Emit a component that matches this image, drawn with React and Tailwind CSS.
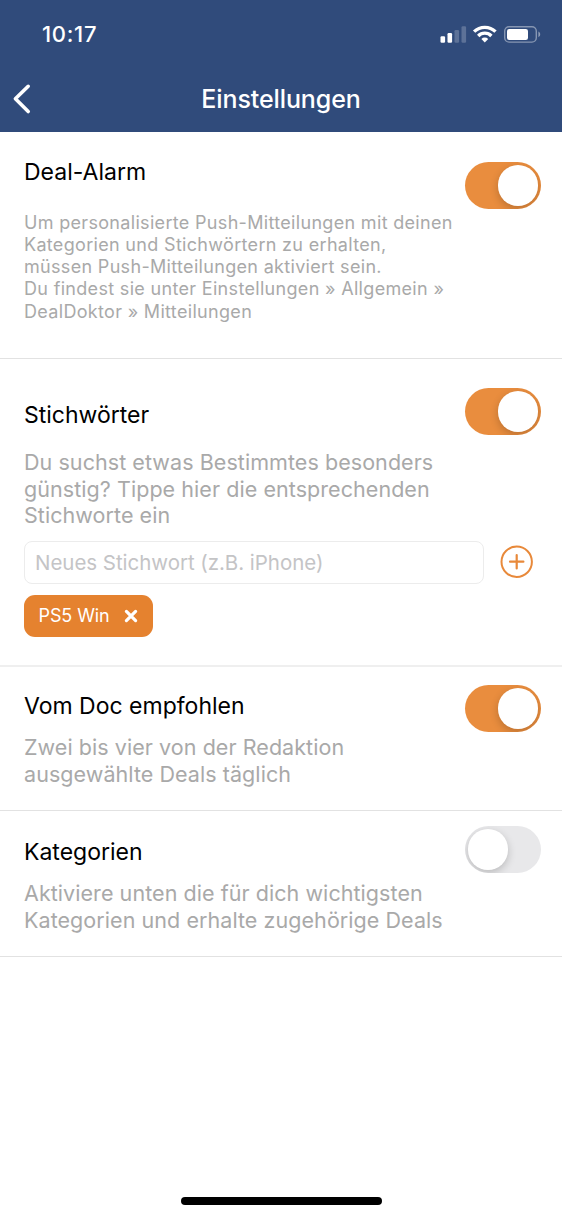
import React, { useState } from 'react';
import clsx from 'clsx';

function StatusBar() {
  return (
    <div className="flex h-[66px] items-start justify-between pl-[42px] pr-[21px] pt-[20px] text-white">
      <span className="text-[22px] font-medium leading-[28px] tracking-[0.7px]">10:17</span>
      <svg className="mt-[5px] h-[18px] w-[101px]" viewBox="0 0 101 18" fill="none">
        <rect x="0.5" y="11.2" width="4.6" height="6.5" rx="1.2" fill="white" />
        <rect x="7.5" y="8" width="4.6" height="9.7" rx="1.2" fill="white" />
        <rect x="14.5" y="5" width="4.6" height="12.7" rx="1.2" fill="white" fillOpacity="0.22" />
        <rect x="21.5" y="1.2" width="4.6" height="16.5" rx="1.2" fill="white" fillOpacity="0.22" />
        <g stroke="white" strokeWidth="3.3">
          <path d="M34.1 6.7a15.2 15.2 0 0 1 21.4 0" />
          <path d="M38.2 11a9.2 9.2 0 0 1 13.2 0" />
        </g>
        <path d="M41.4 14a4.8 4.8 0 0 1 6.8 0l-3.4 3.6z" fill="white" />
        <rect x="64.7" y="1.7" width="31.6" height="15.4" rx="4.4" stroke="white" strokeOpacity="0.42" strokeWidth="1.4" />
        <rect x="67" y="4" width="21" height="11" rx="2.2" fill="white" />
        <path d="M98.4 6.6v5.6c2.4-1 2.4-4.6 0-5.6z" fill="white" fillOpacity="0.45" />
      </svg>
    </div>
  );
}

function Header() {
  return (
    <header className="h-[132px] bg-[#304b7b]">
      <StatusBar />
      <div className="grid h-[66px] grid-cols-[60px_1fr_60px] items-center">
        <button className="pl-[12px]" aria-label="Zurück">
          <svg className="h-[32px] w-[20px]" viewBox="0 0 20 32" fill="none">
            <path d="M16.2 3.3 3.4 15.8 16.2 28.6" stroke="white" strokeWidth="3.6" strokeLinecap="round" strokeLinejoin="round" />
          </svg>
        </button>
        <h1 className="text-center text-[25px] font-medium leading-[32px] tracking-[-0.1px] text-white">Einstellungen</h1>
      </div>
    </header>
  );
}

function Toggle({ label, defaultOn = false }) {
  const [on, setOn] = useState(defaultOn);
  return (
    <button
      role="switch"
      aria-checked={on}
      aria-label={label}
      onClick={() => setOn(!on)}
      className={clsx(
        'flex h-[46.5px] w-[76.5px] shrink-0 items-center overflow-hidden rounded-full px-[3px]',
        on ? 'justify-end bg-[#e98d3e]' : 'justify-start bg-[#e8e8ea]'
      )}
    >
      <span className="size-[40.5px] rounded-full bg-white shadow-[0_3px_8px_rgba(0,0,0,0.2)]" />
    </button>
  );
}

function Title({ children }) {
  return <h2 className="text-[23px] leading-[28px] tracking-[0px] text-black">{children}</h2>;
}

function Description({ lines }) {
  return (
    <p className="whitespace-nowrap text-[21.5px] leading-[26.7px] tracking-[0.06px] text-[#a9a9a9]">
      {lines.map((line) => (
        <span key={line} className="block">{line}</span>
      ))}
    </p>
  );
}

const alarmLines = [
  'Um personalisierte Push-Mitteilungen mit deinen',
  'Kategorien und Stichwörtern zu erhalten,',
  'müssen Push-Mitteilungen aktiviert sein.',
  'Du findest sie unter Einstellungen » Allgemein »',
  'DealDoktor » Mitteilungen',
];

export default function App() {
  return (
    <div className="flex h-[1217px] w-[562px] flex-col bg-white font-['Inter',sans-serif]">
      <Header />
      <main className="flex-1">
        <section className="flex h-[227px] justify-between border-b border-[#e2e2e2] pl-[24px] pr-[21px]">
          <div className="pt-[26px]">
            <Title>Deal-Alarm</Title>
            <p className="mt-[25.6px] whitespace-nowrap text-[18px] leading-[22.3px] tracking-[0.32px] text-[#a9a9a9]">
              {alarmLines.map((line) => (
                <span key={line} className="block">{line}</span>
              ))}
            </p>
          </div>
          <div className="pt-[30px]">
            <Toggle label="Deal-Alarm" defaultOn />
          </div>
        </section>

        <section className="h-[308px] border-b-2 border-[#efefef] pl-[24px] pr-[21px]">
          <div className="flex h-[182px] justify-between">
            <div className="pt-[42px]">
              <Title>Stichwörter</Title>
              <div className="mt-[20px]">
                <Description
                  lines={['Du suchst etwas Bestimmtes besonders', 'günstig? Tippe hier die entsprechenden', 'Stichworte ein']}
                />
              </div>
            </div>
            <div className="pt-[29px]">
              <Toggle label="Stichwörter" defaultOn />
            </div>
          </div>
          <div className="flex items-start">
            <input
              placeholder="Neues Stichwort (z.B. iPhone)"
              className="h-[43px] w-[460px] rounded-[8px] border-[1.5px] border-[#ececec] px-[10px] text-[20.5px] tracking-[-0.04px] placeholder:text-[#c4c4c6]"
            />
            <button className="ml-[16px] mt-[4px]" aria-label="Hinzufügen">
              <svg className="size-[34px]" viewBox="0 0 34 34" fill="none" stroke="#e8893a" strokeLinecap="round">
                <circle cx="16.7" cy="16.7" r="15.2" strokeWidth="2" />
                <path d="M16.7 10v13.4M10 16.7h13.4" strokeWidth="2.2" />
              </svg>
            </button>
          </div>
          <div className="mt-[11px] flex h-[42px] w-[128.5px] items-center rounded-[11px] bg-[#e5822f] pl-[14.5px] text-white">
            <span className="text-[18px] leading-[24px] tracking-[-0.1px]">PS5 Win</span>
            <svg className="ml-auto mr-[14.5px] size-[14px]" viewBox="0 0 14 14" fill="none" stroke="white" strokeWidth="3.2" strokeLinecap="round">
              <path d="m2.4 2.4 9.2 9.2M11.6 2.4l-9.2 9.2" />
            </svg>
          </div>
        </section>

        <section className="flex h-[144px] justify-between border-b border-[#e2e2e2] pl-[24px] pr-[21px]">
          <div className="pt-[25px]">
            <Title>Vom Doc empfohlen</Title>
            <div className="mt-[14px]">
              <Description lines={['Zwei bis vier von der Redaktion', 'ausgewählte Deals täglich']} />
            </div>
          </div>
          <div className="pt-[18px]">
            <Toggle label="Vom Doc empfohlen" defaultOn />
          </div>
        </section>

        <section className="flex h-[146px] justify-between border-b border-[#e2e2e2] pl-[24px] pr-[21px]">
          <div className="pt-[27px]">
            <Title>Kategorien</Title>
            <div className="mt-[14px]">
              <Description lines={['Aktiviere unten die für dich wichtigsten', 'Kategorien und erhalte zugehörige Deals']} />
            </div>
          </div>
          <div className="pt-[15px]">
            <Toggle label="Kategorien" />
          </div>
        </section>
      </main>
      {/* home indicator */}
      <div className="mb-[12px] ml-[181px] h-[8px] w-[201px] rounded-full bg-black" />
    </div>
  );
}
